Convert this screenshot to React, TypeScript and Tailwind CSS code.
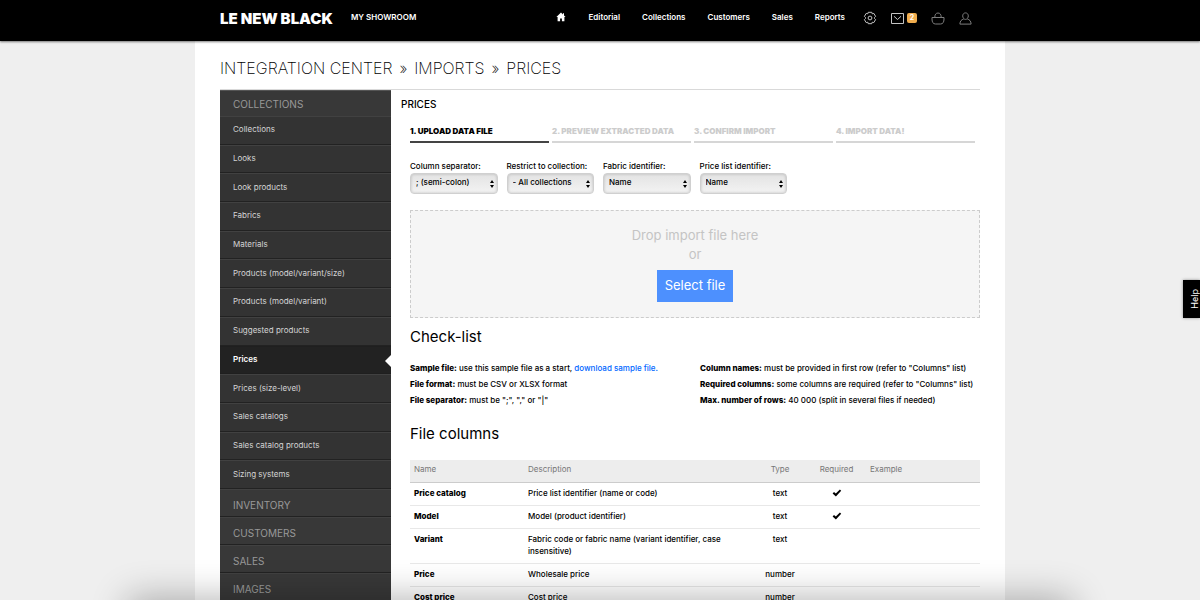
import type { ReactNode } from 'react';

const collectionLinks = [
  'Collections',
  'Looks',
  'Look products',
  'Fabrics',
  'Materials',
  'Products (model/variant/size)',
  'Products (model/variant)',
  'Suggested products',
  'Prices',
  'Prices (size-level)',
  'Sales catalogs',
  'Sales catalog products',
  'Sizing systems',
];

const otherSections = ['INVENTORY', 'CUSTOMERS', 'SALES', 'IMAGES'];

const steps = ['1. UPLOAD DATA FILE', '2. PREVIEW EXTRACTED DATA', '3. CONFIRM IMPORT', '4. IMPORT DATA!'];

const filters = [
  { id: 'separator', label: 'Column separator:', value: '; (semi-colon)' },
  { id: 'collection', label: 'Restrict to collection:', value: '- All collections' },
  { id: 'fabric', label: 'Fabric identifier:', value: 'Name' },
  { id: 'pricelist', label: 'Price list identifier:', value: 'Name' },
];

const columns = [
  { name: 'Price catalog', description: 'Price list identifier (name or code)', type: 'text', required: true },
  { name: 'Model', description: 'Model (product identifier)', type: 'text', required: true },
  { name: 'Variant', description: 'Fabric code or fabric name (variant identifier, case insensitive)', type: 'text', required: false },
  { name: 'Price', description: 'Wholesale price', type: 'number', required: false },
  { name: 'Cost price', description: 'Cost price', type: 'number', required: false },
];

function HomeIcon() {
  return (
    <svg viewBox="0 0 10 10" className="size-[10px] fill-white" aria-hidden="true">
      <path d="M5 .6 .4 5h1.2v4.2h2.5V6.4h1.8v2.8h2.5V5h1.2L8 3.4V1.2H6.9v1.2z" />
    </svg>
  );
}

function GearIcon() {
  return (
    <svg viewBox="0 0 14 14" className="size-[14px] fill-none stroke-[#c4c4c4]" strokeWidth="1" aria-hidden="true">
      <path
        d="M5.2 1.3h3.600l.4 1.500 1.600-.4 1.800 3-1.100 1.100v1l1.100 1.100-1.800 3-1.600-.4-.4 1.500H5.200l-.4-1.500-1.600.4-1.800-3 1.100-1.100v-1L1.400 5.400l1.800-3 1.600.4z"
        strokeLinejoin="round"
      />
      <circle cx="7" cy="7" r="1.900" />
    </svg>
  );
}

function MailIcon() {
  return (
    <svg viewBox="0 0 13 11" className="h-[11px] w-[13px] fill-none stroke-[#c4c4c4]" strokeWidth="1" aria-hidden="true">
      <path d="M.5.500h12v10H.5zM3 3.300l3.500 3.200L10 3.300" />
    </svg>
  );
}

function BagIcon() {
  return (
    <svg viewBox="0 0 14 13" className="h-[13px] w-[14px] fill-none stroke-[#7d7d7d]" strokeWidth="1" aria-hidden="true">
      <path d="M1 5.500h12v1.500c0 3-1 5-3.500 5h-5C2 12 1 10 1 7zM3.800 5.300C3.800 2.500 5 1 7 1s3.200 1.500 3.200 4.300" />
    </svg>
  );
}

function UserIcon() {
  return (
    <svg viewBox="0 0 13 13" className="size-[13px] fill-none stroke-[#7d7d7d]" strokeWidth="1" aria-hidden="true">
      <path d="M6.500.9c1.700 0 2.800 1.300 2.800 3S8.200 7.400 6.500 7.400 3.700 5.600 3.700 3.900 4.800.9 6.500.9zM4.700 7C2.400 7.700 1 9 .9 12.100h11.200C12 9 10.600 7.700 8.300 7" />
    </svg>
  );
}

function NavLink({ children }: { children: ReactNode }) {
  return (
    <a href="#" className="text-[8px] font-semibold text-white">
      {children}
    </a>
  );
}

function TopBar() {
  return (
    <header className="relative bg-black shadow-[0_1px_2px_rgba(0,0,0,0.5)]">
      <div className="mx-auto flex h-[41px] max-w-[810px] items-start px-[25px] pt-[7px]">
        <a href="#" className="flex h-6 items-center text-[15px] font-black text-white">
          LE NEW BLACK
        </a>
        <a href="#" className="ml-[18px] flex h-5 items-center text-[8px] font-semibold text-white">
          MY SHOWROOM
        </a>
        <nav className="ml-auto flex h-5 items-center gap-[22px]">
          <a href="#" aria-label="Home">
            <HomeIcon />
          </a>
          <NavLink>Editorial</NavLink>
          <NavLink>Collections</NavLink>
          <NavLink>Customers</NavLink>
          <NavLink>Sales</NavLink>
          <NavLink>Reports</NavLink>
        </nav>
        <div className="mr-2 ml-[18px] flex h-[22px] items-center gap-[14px]">
          <a href="#" aria-label="Settings">
            <GearIcon />
          </a>
          <a href="#" aria-label="Messages" className="flex items-center gap-[3px]">
            <MailIcon />
            <span className="flex h-[10px] w-[10px] items-center justify-center rounded-xs bg-[#f0ad4e] text-[7px] font-bold text-white">2</span>
          </a>
          <a href="#" aria-label="Basket">
            <BagIcon />
          </a>
          <a href="#" aria-label="Account">
            <UserIcon />
          </a>
        </div>
      </div>
    </header>
  );
}

function Sidebar() {
  return (
    <nav className="w-[171px] shrink-0 bg-[#333]">
      <h2 className="h-[26px] border-t border-[#555] bg-[#383838] px-[13px] pt-[1px] text-[10px] leading-6 text-[#999]">COLLECTIONS</h2>
      <ul className="grid h-[373px] auto-rows-fr">
        {collectionLinks.map((label) => {
          const active = label === 'Prices';
          return (
            <li key={label} className={active ? 'relative border-y border-[#1f1f1f] bg-[#222]' : 'border-t border-b border-t-[#414141] border-b-[#222]'}>
              <a
                href="#"
                className={
                  active
                    ? 'flex h-full items-center px-[13px] pb-[2px] text-[8px] font-semibold text-white'
                    : 'flex h-full items-center px-[13px] pb-[2px] text-[8px] text-[#d4d4d4]'
                }
              >
                {label}
              </a>
              {active && (
                <svg viewBox="0 0 6 12" className="absolute top-2 right-0 h-3 w-[6px] fill-white" aria-hidden="true">
                  <path d="M6 0v12L0 6z" />
                </svg>
              )}
            </li>
          );
        })}
      </ul>
      {otherSections.map((label) => (
        <h2 key={label} className="h-7 border-t border-b border-t-[#414141] border-b-[#222] bg-[#383838] px-[13px] pt-[3px] text-[10px] leading-6 text-[#999]">
          <a href="#">{label}</a>
        </h2>
      ))}
    </nav>
  );
}

function Filter({ id, label, value }: { id: string; label: string; value: string }) {
  return (
    <div>
      <label htmlFor={id} className="block text-[8px] leading-3 font-medium whitespace-nowrap">
        {label}
      </label>
      <div className="relative mt-[1px]">
        <select
          id={id}
          className="block h-[21px] w-full appearance-none rounded-[4px] border border-[#d0d0d0] bg-linear-to-b from-[#e3e3e3] to-[#f3f3f3] pr-3 pb-[3px] pl-[5px] text-[8px] font-medium text-black shadow-[inset_0_0_3px_rgba(0,0,0,0.2)]"
        >
          <option>{value}</option>
        </select>
        <svg viewBox="0 0 4 8" className="pointer-events-none absolute top-[7px] right-1 h-2 w-1 fill-black" aria-hidden="true">
          <path d="M2 0l2 3H0zM0 5h4L2 8z" />
        </svg>
      </div>
    </div>
  );
}

function CheckItem({ term, children }: { term: string; children: ReactNode }) {
  return (
    <li>
      <strong className="font-extrabold">{term}</strong> {children}
    </li>
  );
}

function ColumnsTable() {
  return (
    <table className="mt-[14px] w-full table-fixed border-collapse text-left text-[8px] leading-3">
      <colgroup>
        <col className="w-[114px]" />
        <col className="w-[229px]" />
        <col className="w-[54px]" />
        <col className="w-[59px]" />
        <col />
      </colgroup>
      <thead>
        <tr className="h-[22px] border-b border-[#ccc] bg-[#ededed] text-[#777]">
          <th className="px-1 pb-[3px] font-normal">Name</th>
          <th className="px-1 pb-[3px] font-normal">Description</th>
          <th className="px-1 pb-[3px] text-center font-normal">Type</th>
          <th className="px-1 pb-[3px] text-center font-normal">Required</th>
          <th className="px-1 pb-[3px] font-normal">Example</th>
        </tr>
      </thead>
      <tbody>
        {columns.map((column) => (
          <tr key={column.name} className="border-b border-[#e8e8e8] align-top font-medium">
            <td className="px-1 pt-1 pb-[6px] font-extrabold">{column.name}</td>
            <td className="pt-1 pr-8 pb-[6px] pl-1">{column.description}</td>
            <td className="px-1 pt-1 pb-[6px] text-center">{column.type}</td>
            <td className="px-1 pt-1 pb-[6px]">
              {column.required && (
                <svg viewBox="0 0 10 8" className="mx-auto mt-[2px] h-2 w-[10px] fill-black" role="img" aria-label="Required">
                  <path d="M.6 4.500 2 3l1.800 1.600L7.900.4l1.300 1.300-5.300 5.700z" />
                </svg>
              )}
            </td>
            <td className="px-1 pt-1 pb-[6px]" />
          </tr>
        ))}
      </tbody>
    </table>
  );
}

export default function App() {
  return (
    <div className="relative flex h-screen flex-col overflow-hidden bg-[#efefef] font-['Inter','Liberation_Sans',sans-serif] text-black">
      <TopBar />
      <div className="mx-auto w-full max-w-[810px] grow bg-white px-[25px]">
        <h1 className="flex h-[48px] items-center gap-[7px] pt-[6px] text-[16px] font-extralight whitespace-nowrap">
          <a href="#">INTEGRATION CENTER</a>
          <span>»</span>
          <a href="#">IMPORTS</a>
          <span>»</span>
          <span>PRICES</span>
        </h1>
        <div className="flex items-start border-t border-[#d9d9d9]">
          <Sidebar />
          <main className="min-w-0 grow pl-[10px]">
            <h2 className="pt-[6px] text-[10px] leading-4 font-medium">PRICES</h2>
            <div className="pl-[9px]">
              <ol className="mt-3 mr-[5px] grid grid-cols-4 gap-[3px]">
                {steps.map((step, index) => (
                  <li
                    key={step}
                    className={
                      index === 0
                        ? 'h-[19px] border-b-2 border-[#444] text-[8px] leading-[15px] font-black whitespace-nowrap'
                        : 'h-[19px] border-b-2 border-[#d6d6d6] text-[8px] leading-[15px] font-black whitespace-nowrap text-[#ccc]'
                    }
                  >
                    {step}
                  </li>
                ))}
              </ol>
              <form className="mt-[17px] grid grid-cols-6 gap-[9px]">
                {filters.map((filter) => (
                  <Filter key={filter.id} {...filter} />
                ))}
              </form>
              <section className="mt-4 flex h-[108px] flex-col items-center border border-dashed border-[#ccc] bg-[#f5f5f5] pt-[15px] text-[13px] leading-[19px] text-[#c4c4c4]">
                <p>Drop import file here</p>
                <p>or</p>
                <button type="button" className="mt-[6px] h-8 bg-[#4d90fe] px-2 pb-[2px] text-[13px] text-white">
                  Select file
                </button>
              </section>
              <h2 className="mt-[7px] text-[15px] leading-6">Check-list</h2>
              <div className="mt-[11px] grid grid-cols-2 gap-[10px] text-[8px] leading-4 font-medium whitespace-nowrap">
                <ul>
                  <CheckItem term="Sample file:">
                    use this sample file as a start,{' '}
                    <a href="#" className="text-[#0066ff]">
                      download sample file.
                    </a>
                  </CheckItem>
                  <CheckItem term="File format:">must be CSV or XLSX format</CheckItem>
                  <CheckItem term="File separator:">must be ";", "," or "|"</CheckItem>
                </ul>
                <ul>
                  <CheckItem term="Column names:">must be provided in first row (refer to "Columns" list)</CheckItem>
                  <CheckItem term="Required columns:">some columns are required (refer to "Columns" list)</CheckItem>
                  <CheckItem term="Max. number of rows:">40 000 (split in several files if needed)</CheckItem>
                </ul>
              </div>
              <h2 className="mt-[14px] text-[15px] leading-6">File columns</h2>
              <ColumnsTable />
            </div>
          </main>
        </div>
      </div>
      <button
        type="button"
        className="absolute top-[280px] right-0 flex h-[38px] w-[17px] items-center justify-end bg-black text-[9px] leading-[10px] text-white shadow-[0_0_3px_rgba(0,0,0,0.4)]"
      >
        <span className="rotate-180 [writing-mode:vertical-rl]">Help</span>
      </button>
      <div className="pointer-events-none absolute inset-x-[130px] top-full h-10 shadow-[0_0_36px_2px_rgba(0,0,0,0.3)]" />
    </div>
  );
}
